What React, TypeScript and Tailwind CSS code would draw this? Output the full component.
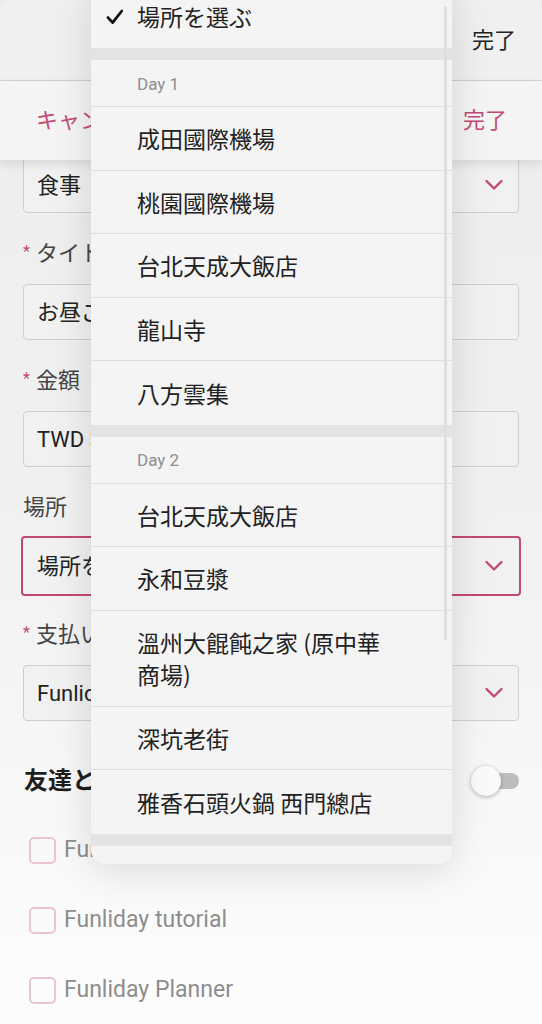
const PINK = "text-[#c24a72]";

function Chevron() {
  return (
    <svg width="20" height="12" viewBox="0 0 20 12" className="shrink-0">
      <path d="M2.5 2 L10 9.5 L17.5 2" fill="none" stroke="#c24a72" strokeWidth="2.4" strokeLinecap="round" strokeLinejoin="round" />
    </svg>
  );
}

function Label({ text, required = false }: { text: string; required?: boolean }) {
  return (
    <div className="h-[30px] mb-[15px] flex items-center text-[22px] text-[#444] leading-[30px]">
      {required && <span className="text-[#c24a72] text-[16px] mr-[6px] -mt-[4px]">*</span>}
      {text}
    </div>
  );
}

function Field({ value, select = false, focused = false }: { value: string; select?: boolean; focused?: boolean }) {
  return (
    <div
      className={
        "rounded-[4px] flex items-center justify-between pl-[13px] pr-[14px] text-[22px] text-[#222] bg-[#f1f1f1] " +
        (focused ? "border-2 border-[#c24a72] -mx-[2px] h-[60px] -my-[2px] pl-[14px] pr-[15px]" : "h-[56px] border border-[#cfcfcf]")
      }
    >
      <span>{value}</span>
      {select && <Chevron />}
    </div>
  );
}

function Check({ label }: { label: string }) {
  return (
    <div className="h-[70px] flex items-center pl-[6px] gap-[8px]">
      <div className="w-[27px] h-[27px] rounded-[5px] border-2 border-[#ecc4d1]" />
      <span className="text-[23px] text-[#8d8d8d]">{label}</span>
    </div>
  );
}

type Row = { kind: "item"; text: string; checked?: boolean; two?: boolean } | { kind: "band" } | { kind: "day"; text: string };

const rows: Row[] = [
  { kind: "item", text: "場所を選ぶ", checked: true },
  { kind: "band" },
  { kind: "day", text: "Day 1" },
  { kind: "item", text: "成田國際機場" },
  { kind: "item", text: "桃園國際機場" },
  { kind: "item", text: "台北天成大飯店" },
  { kind: "item", text: "龍山寺" },
  { kind: "item", text: "八方雲集" },
  { kind: "band" },
  { kind: "day", text: "Day 2" },
  { kind: "item", text: "台北天成大飯店" },
  { kind: "item", text: "永和豆漿" },
  { kind: "item", text: "溫州大餛飩之家 (原中華", two: true },
  { kind: "item", text: "深坑老街" },
  { kind: "item", text: "雅香石頭火鍋 西門總店" },
  { kind: "band" },
];

function Menu() {
  return (
    <div className="absolute z-20 left-[91px] top-[-16px] w-[361px] h-[880px] rounded-[14px] overflow-hidden bg-[#f4f4f4] shadow-[0_6px_40px_rgba(0,0,0,0.13)]">
      {rows.map((r, i) => {
        const next = rows[i + 1];
        const line = next && next.kind !== "band" ? "border-b border-[#dcdcdc]" : "";
        if (r.kind === "band") return <div key={i} className="h-[12px] bg-[#e3e3e3]" />;
        if (r.kind === "day")
          return (
            <div key={i} className={"h-[47px] flex items-center pl-[46px] pt-[3px] text-[17px] text-[#8e8e8e] " + line}>
              {r.text}
            </div>
          );
        return (
          <div
            key={i}
            className={
              "relative flex items-center pl-[46px] text-[23px] text-[#222] leading-[32px] font-['Noto_Sans_CJK_JP',sans-serif] " +
              (r.two ? "h-[96px] " : i === 0 ? "h-[64px] " : "h-[63.5px] ") +
              line
            }
          >
            {r.checked && (
              <svg className="absolute left-[15px] top-[25px]" width="18" height="16" viewBox="0 0 18 16">
                <path d="M2 8.6 L6.6 13.6 L15.8 2" fill="none" stroke="#111" strokeWidth="2.8" strokeLinecap="round" strokeLinejoin="round" />
              </svg>
            )}
            {r.two ? (
              <span>
                {r.text}
                <br />
                商場)
              </span>
            ) : (
              <span>{r.text}</span>
            )}
          </div>
        );
      })}
      <div className="h-[20px] pl-[46px] pt-[14px] text-[17px] leading-[20px] text-[#8e8e8e]">Day 3</div>
      <div className="absolute right-[5px] top-[22px] w-[3px] h-[634px] rounded-full bg-[#dedede]" />
    </div>
  );
}

export default function App() {
  return (
    <div className="relative w-[542px] h-[1024px] overflow-hidden bg-gradient-to-b from-[#ededed] via-[#f1f1f1] to-[#fdfdfd] font-['Roboto','Noto_Sans_CJK_JP',sans-serif]">
      <div className="h-[81px] border-b border-[#d2d2d2] flex items-center justify-end pr-[26px] bg-[#f0f0f0] rounded-t-[14px]">
        <span className="text-[22px] text-[#222]">完了</span>
      </div>
      <div className="relative z-10 h-[79px] flex items-center justify-between px-[36px] bg-[#f4f4f4] shadow-[0_4px_10px_rgba(0,0,0,0.1)]">
        <span className={"text-[22px] " + PINK}>キャンセル</span>
        <span className={"text-[22px] -mr-[1px] " + PINK}>完了</span>
      </div>

      <div className="px-[23px] -mt-[3px] flex flex-col gap-[26px]">
        <Field value="食事" select />
        <div>
          <Label text="タイトル" required />
          <Field value="お昼ご飯" />
        </div>
        <div>
          <Label text="金額" required />
          <Field value="TWD 300" />
        </div>
        <div>
          <Label text="場所" />
          <Field value="場所を選ぶ" select focused />
        </div>
        <div>
          <Label text="支払い者" required />
          <Field value="Funliday" select />
        </div>
      </div>

      <div className="mt-[44px] px-[23px] h-[32px] flex items-center justify-between">
        <span className="text-[24px] font-bold text-[#1e1e1e] pl-[1px]">友達と割り勘</span>
        <div className="relative w-[48px] h-[30px] flex items-center">
          <div className="ml-[8px] w-[40px] h-[16px] rounded-full bg-[#bdbdbd]" />
          <div className="absolute left-0 top-0 w-[30px] h-[30px] rounded-full bg-[#fafafa] shadow-[0_1px_4px_rgba(0,0,0,0.3)]" />
        </div>
      </div>

      <div className="mt-[18px] px-[23px]">
        <Check label="Funliday" />
        <Check label="Funliday tutorial" />
        <Check label="Funliday Planner" />
      </div>

      <Menu />
    </div>
  );
}
